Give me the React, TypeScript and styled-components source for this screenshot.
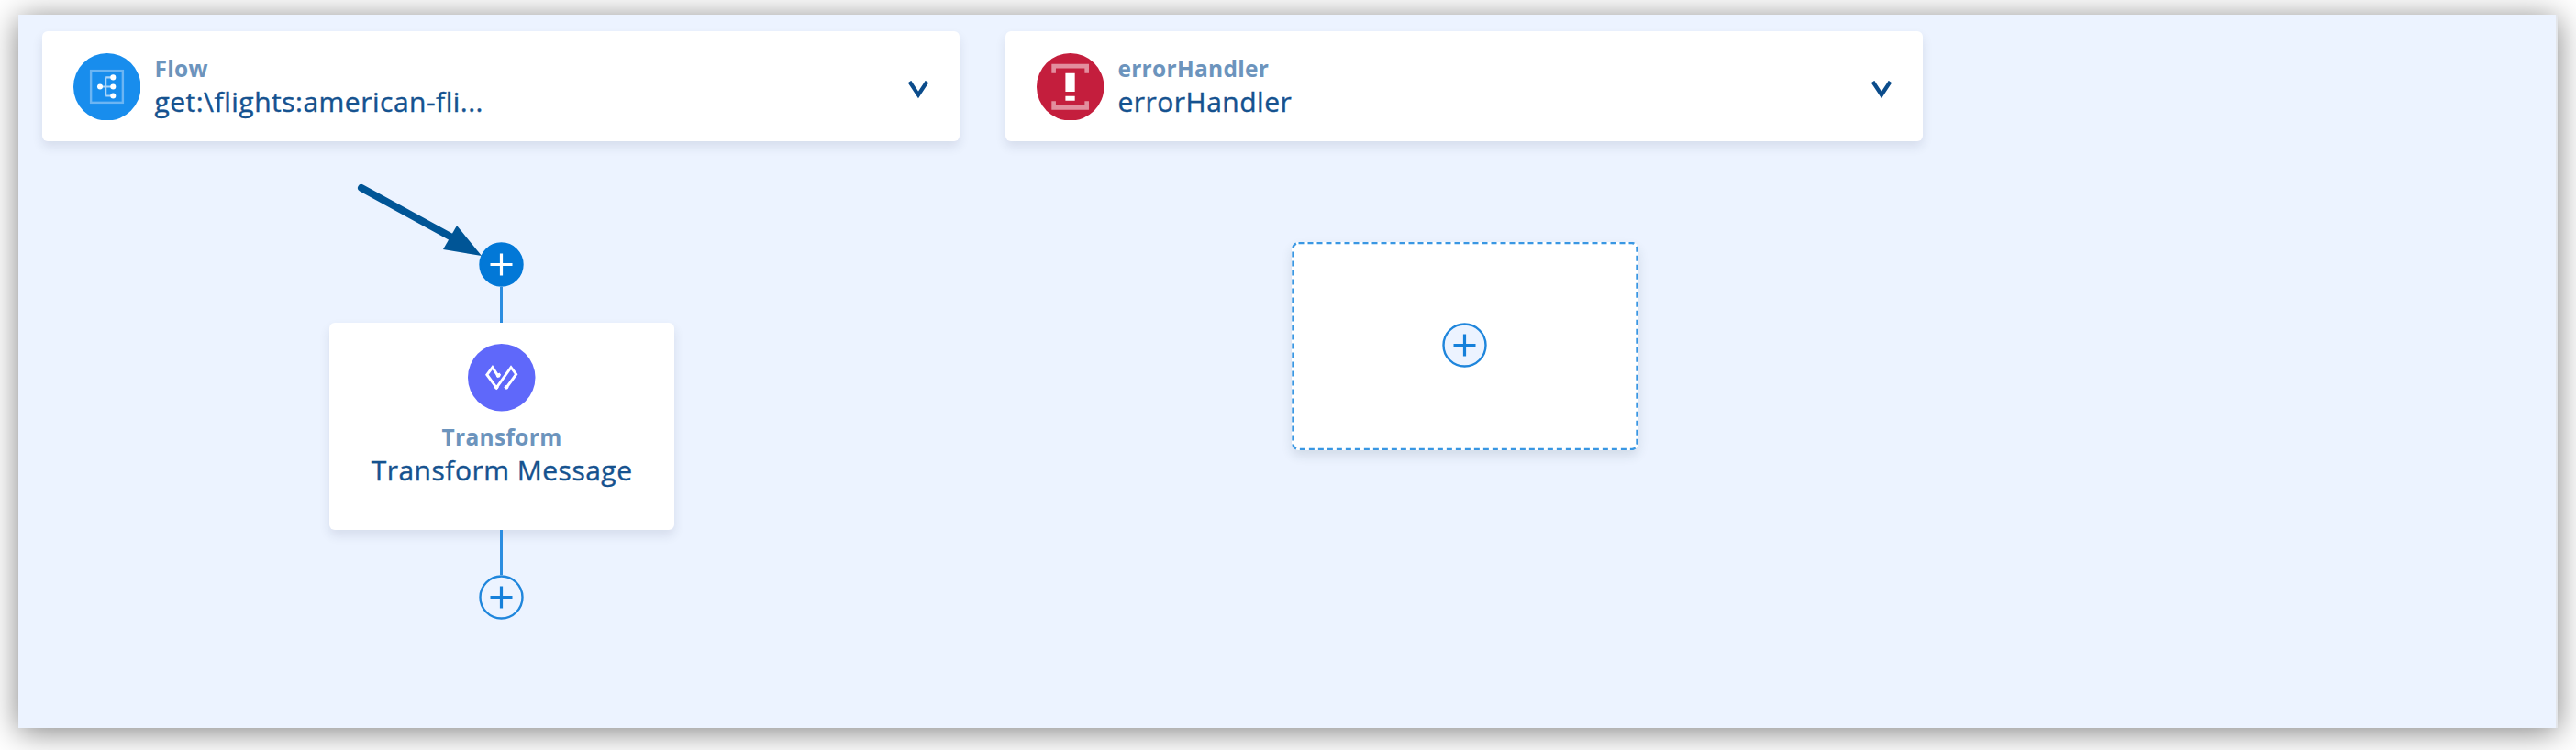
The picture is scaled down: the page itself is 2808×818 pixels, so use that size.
import React from "react";
import styled, { createGlobalStyle } from "styled-components";

const GlobalStyle = createGlobalStyle`
  *, *::before, *::after { box-sizing: border-box; }
  body { margin: 0; background: #fff; font-family: "Open Sans", "Noto Sans", sans-serif; }
`;

const Page = styled.main`
  height: 818px;
  padding: 16px 20px 24px;
  overflow: hidden;
`;

const Canvas = styled.div`
  position: relative;
  display: flex;
  gap: 50px;
  height: 778px;
  padding: 18px 24px 0 26.4px;
  background: #ecf3ff;
  border-right: 2px solid #e4e6ea;
  box-shadow: 0 4px 32px rgba(0, 0, 0, 0.5);
`;

const Lane = styled.section`
  display: flex;
  flex-direction: column;
  align-items: center;
  width: 1000px;
`;

const LaneHeader = styled.header`
  display: flex;
  align-items: center;
  width: 100%;
  height: 120px;
  padding: 1px 33px 0 33.5px;
  background: #fff;
  border-radius: 6px;
  box-shadow: 0 6px 12px rgba(40, 50, 80, 0.11);
`;

const IconDisc = styled.svg`
  display: block;
  flex: none;
  width: 73.5px;
  height: 73.5px;
`;

const Labels = styled.div`
  flex: 1;
  margin: -4px 0 0 15px;
`;

const Kind = styled.div`
  color: #6c94bd;
  font-size: 24.5px;
  font-weight: 700;
  line-height: 36px;
  letter-spacing: 0.3px;
  white-space: nowrap;
`;

const Name = styled.div`
  color: #15528f;
  font-size: 30px;
  font-weight: 400;
  line-height: 36px;
  letter-spacing: 0.5px;
  -webkit-text-stroke: 0.4px #15528f;
  font-variant-ligatures: none;
  white-space: nowrap;
`;

const Chevron = styled.svg`
  width: 24px;
  height: 20px;
  margin-top: 6px;
`;

const Steps = styled.div<{ $offset: number }>`
  display: flex;
  flex-direction: column;
  align-items: center;
  margin: ${(p) => p.$offset}px 0 0 1.4px;
`;

const AddButton = styled.button`
  display: block;
  width: 49px;
  height: 49px;
  margin: 0 1px 0 0;
  padding: 0;
  border: 0;
  background: none;
`;

const Connector = styled.div<{ $length: number }>`
  width: 3px;
  height: ${(p) => p.$length}px;
  margin-right: 1px;
  background: #2b8de0;
`;

const StepCard = styled.article`
  display: flex;
  flex-direction: column;
  align-items: center;
  width: 376px;
  height: 226px;
  padding-top: 23px;
  background: #fff;
  border-radius: 6px;
  box-shadow: 0 6px 12px rgba(40, 50, 80, 0.11);
`;

const StepLabels = styled.div`
  margin-top: 10px;
  text-align: center;
`;

const DropZone = styled.div`
  position: relative;
  display: flex;
  align-items: center;
  justify-content: center;
  width: 378px;
  height: 227px;
  padding-bottom: 2px;
  background: #fff;
  border-radius: 8px;
  box-shadow: 0 6px 12px rgba(40, 60, 80, 0.13);
`;

const DashedOutline = styled.svg`
  position: absolute;
  inset: 0;
  width: 100%;
  height: 100%;
`;

const Pointer = styled.svg`
  position: absolute;
  left: 366px;
  top: 180px;
  width: 164px;
  height: 90px;
`;

function FlowIcon() {
  return (
    <IconDisc viewBox="0 0 73 73">
      <circle cx="36.5" cy="36.5" r="36.5" fill="#188ded" />
      <rect x="19" y="19" width="34.5" height="34.5" fill="none" stroke="#6cb5f3" strokeWidth="2.4" />
      <path d="M28.5 36.2H43M35 26.2V46.2M35 26.2H43M35 46.2H43" fill="none" stroke="#a9d4f9" strokeWidth="2" />
      <g fill="#fff">
        <circle cx="28.8" cy="36.2" r="3" />
        <circle cx="43" cy="26.2" r="3" />
        <circle cx="43" cy="36.2" r="3" />
        <circle cx="43" cy="46.2" r="3" />
      </g>
    </IconDisc>
  );
}

function ErrorIcon() {
  return (
    <IconDisc viewBox="0 0 73 73">
      <circle cx="36.5" cy="36.5" r="36.5" fill="#c41e3d" />
      <path d="M18.5 21.5V14H54.3V21.5M18.5 52V59H54.3V52" fill="none" stroke="#e28e9e" strokeWidth="4.6" />
      <path d="M31.2 21.6H41.4V41.6H31.2ZM31.2 46.4H41.4V51.5H31.2Z" fill="#fff" />
    </IconDisc>
  );
}

function TransformIcon() {
  return (
    <IconDisc viewBox="0 0 73 73">
      <circle cx="36.5" cy="36.5" r="36.5" fill="#5f68fa" />
      <path
        d="M35 32.5L32.5 34.5L26.7 25.5L20.7 33.5L31 47.5L46.7 25.5L52.3 33L41.7 47.5"
        fill="none"
        stroke="#fff"
        strokeWidth="2.9"
      />
      <g fill="#fff">
        <circle cx="33" cy="34.3" r="2.3" />
        <circle cx="31" cy="47" r="2.3" />
        <circle cx="41.7" cy="47" r="2.3" />
      </g>
    </IconDisc>
  );
}

function Plus({ solid = false }: { solid?: boolean }) {
  return (
    <AddButton aria-label="Add component">
      <svg width="49" height="49" viewBox="0 0 49 49" display="block">
        <circle cx="24.5" cy="24.5" r="23" fill={solid ? "#0278d7" : "#ecf3ff"} stroke={solid ? "#0278d7" : "#1f86dc"} strokeWidth="2.4" />
        <path d="M12.5 24.5H36.5M24.5 12.5V36.5" stroke={solid ? "#fff" : "#1580da"} strokeWidth="3.2" />
      </svg>
    </AddButton>
  );
}

function Header({ icon, kind, name }: { icon: React.ReactNode; kind: string; name: string }) {
  return (
    <LaneHeader>
      {icon}
      <Labels>
        <Kind>{kind}</Kind>
        <Name>{name}</Name>
      </Labels>
      <Chevron viewBox="0 0 24 20">
        <path d="M2.5 1L12 15.5L21.5 1" fill="none" stroke="#0b4c8b" strokeWidth="4.2" />
      </Chevron>
    </LaneHeader>
  );
}

export default function App() {
  return (
    <Page>
      <GlobalStyle />
      <Canvas>
        <Lane>
          <Header icon={<FlowIcon />} kind="Flow" name="get:\flights:american-fli..." />
          <Steps $offset={110}>
            <Plus solid />
            <Connector $length={39} />
            <StepCard>
              <TransformIcon />
              <StepLabels>
                <Kind>Transform</Kind>
                <Name>Transform Message</Name>
              </StepLabels>
            </StepCard>
            <Connector $length={49} />
            <Plus />
          </Steps>
        </Lane>
        <Lane>
          <Header icon={<ErrorIcon />} kind="errorHandler" name="errorHandler" />
          <Steps $offset={109.5}>
            <DropZone>
              <DashedOutline viewBox="0 0 378 227">
                <rect x="1.5" y="1" width="375" height="225" rx="6" fill="none" stroke="#3997e3" strokeWidth="2.4" strokeDasharray="6 4" />
              </DashedOutline>
              <Plus />
            </DropZone>
          </Steps>
        </Lane>
        <Pointer viewBox="0 0 164 90">
          <path d="M8 9L114 67" stroke="#005596" strokeWidth="8" strokeLinecap="round" />
          <path d="M112 50L139 83L97 76Z" fill="#005596" />
        </Pointer>
      </Canvas>
    </Page>
  );
}
